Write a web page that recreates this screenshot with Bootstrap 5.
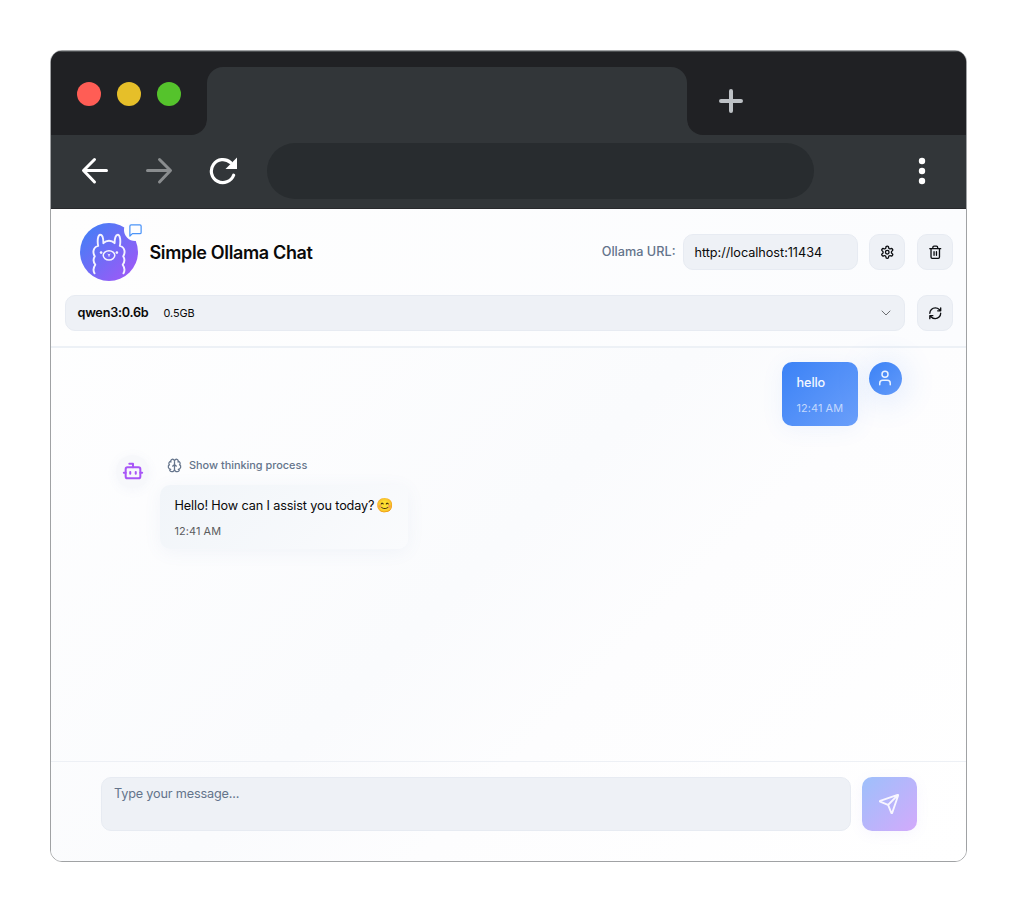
<!DOCTYPE html>
<html lang="en">
<head>
<meta charset="utf-8">
<meta name="viewport" content="width=device-width, initial-scale=1">
<title>Simple Ollama Chat</title>
<link rel="stylesheet" href="https://cdn.jsdelivr.net/npm/bootstrap@5.3.0/dist/css/bootstrap.min.css">
<style>
body{font-family:Inter,"Liberation Sans",sans-serif;background:#fff;color:#0a0a0a;padding:50px;height:912px;overflow:hidden}
.window{width:917px;height:812px;border:1px solid #a0a2a4;border-radius:12px;overflow:hidden;background:#fff}
.tabstrip{height:84px;background:#323639}
.strip-side{background:#202124;box-shadow:inset 0 1px #4b4e50}
.strip-left{width:156px;border-bottom-right-radius:16px;padding:2px 0 0 26px;gap:16px}
.strip-right{border-bottom-left-radius:16px;padding:38px 0 0 32px}
.tab-slot{width:480px;padding-top:16px;background:linear-gradient(#202124 40px,#323639 40px);box-shadow:inset 0 1px #4b4e50}
.tab{height:100%;background:#323639;border-radius:16px 16px 0 0}
.light{width:24px;height:24px;border-radius:50%}
.toolbar{height:74px;background:#323639;border-bottom:1px solid #28292c;padding:0 30px 1px}
.address{width:547px;height:56px;border-radius:28px;background:#282c2f;margin-left:29px}
.app{height:652px;background:linear-gradient(135deg,#fff 0%,#fafbfd 50%,#fdfdfe 65%,#fff 100%)}
.app-head{height:139px;border-bottom:2px solid #edf1f6;padding:14px 13px 0 14px;background:linear-gradient(90deg,#fefefe,#fbfcfe)}
.logo{width:58px;height:58px;border-radius:50%;background:linear-gradient(135deg,#3b82f6,#a855f7);margin-left:15px}
.logo-chip{top:-4px;right:-8px;width:22px;height:22px;border-radius:50%;background:#fdfdff}
.app-title{font-size:18px;font-weight:600;letter-spacing:-.35px;margin-left:11.5px;line-height:24px;padding-top:2px}
.url-label{font-size:12.7px;font-weight:500;color:#64748b;margin-right:7px}
.field{background:#eef1f6;border:1px solid #e7ebf2;border-radius:10px}
.url-field{width:175px;height:36px;font-size:12.7px;padding:8px 11px;line-height:19px;color:#0a0a0a;letter-spacing:-.04px}
.sq{width:36.5px;height:36px;padding:0;margin-left:11.5px;color:#0c0e12}
.sq-mid{margin-left:11px}
.row-model{margin-top:14px}
.model{height:36px;padding:0 12px 0 11.500px}
.model-name{font-size:12.7px;font-weight:600;letter-spacing:-.25px}
.model-size{font-size:10.9px;margin-left:15px;letter-spacing:-.05px}
.chat{height:413px;padding:14px 64px 0 65px}
.bubble{border-radius:10px;padding:11px 14px 0 14.500px;height:64px;font-size:12.7px;line-height:19px}
.bubble .stamp{font-size:10.9px;line-height:16px;margin-top:8px;letter-spacing:.1px}
.bubble-me{width:76px;background:linear-gradient(135deg,#3b82f6,#6b9ffa);color:#f4f8ff;box-shadow:0 3px 22px rgba(59,130,246,.08)}
.bubble-me .hi{font-weight:500;letter-spacing:-.1px}
.bubble-me .stamp{color:#c3d8fd}
.bubble-bot{width:247.5px;background:linear-gradient(135deg,#f1f5f9,#fafbfd);box-shadow:0 3px 18px rgba(100,130,180,.07)}
.bubble-bot .stamp{color:#5b5c5e}
.say{height:19px;letter-spacing:-.14px}
.emoji{font-size:14px;line-height:17px;margin-left:2px;letter-spacing:0}
.face{width:33px;height:33px;border-radius:50%}
.face-me{background:linear-gradient(135deg,#3b82f6,#639af9);margin-left:11px;box-shadow:0 3px 30px 6px rgba(59,130,246,.13)}
.face-bot{background:#f7f8fb;color:#a855f7;margin-right:11px;padding-bottom:2px;box-shadow:0 2px 12px rgba(100,120,180,.06)}
.bot-row{margin-top:29px}
.think{height:20px;padding-left:7px;margin-bottom:10px;font-size:10.9px;font-weight:500;color:#64748b;gap:7px}
.composer{height:98px;border-top:1px solid #edf0f5;padding:15px 49px 0 50px}
.msg{width:750px;height:54px;font-size:12.7px;line-height:19px;padding:6px 12px;color:#64748b;letter-spacing:-.18px}
.send{width:54.5px;height:54px;border-radius:10px;border:0;margin-left:11px;padding:0 1px 1px 0;background:linear-gradient(135deg,#9dc0fb,#d3aafb);box-shadow:0 3px 14px rgba(140,130,240,.07)}
svg{display:block;flex:none}
.ln{fill:none;stroke:currentColor;stroke-width:2;stroke-linecap:round;stroke-linejoin:round}
.sq .ln,.face-bot .ln{stroke-width:2.2}
</style>
</head>
<body>
<div class="window">
  <div class="tabstrip d-flex">
    <div class="strip-side strip-left d-flex align-items-center">
      <div class="light" style="background:#ff5d55"></div>
      <div class="light" style="background:#e6bf29"></div>
      <div class="light" style="background:#55c32c"></div>
    </div>
    <div class="tab-slot"><div class="tab"></div></div>
    <div class="strip-side strip-right flex-grow-1">
      <svg width="24" height="24" viewBox="0 0 24 24" fill="none" stroke="#bdc1c5" stroke-width="4" stroke-linecap="round"><path d="M12 2v20M2 12h20"/></svg>
    </div>
  </div>
  <div class="toolbar d-flex align-items-center">
    <svg width="28" height="28" viewBox="0 0 28 28" fill="none" stroke="#fff" stroke-width="3" stroke-linecap="round" stroke-linejoin="round"><path d="M25.500 13.500H3M13.500 2.500l-11 11 11 11.500"/></svg>
    <svg style="margin-left:36px;margin-right:36px" width="28" height="28" viewBox="0 0 28 28" fill="none" stroke="#8a8d8f" stroke-width="3" stroke-linecap="round" stroke-linejoin="round"><path d="M2.500 13.500H25M14.500 2.500l11 11-11 11.500"/></svg>
    <svg width="29" height="28" viewBox="0 0 29 28" fill="none"><path d="M24.600 18.200A11.500 11.500 0 1 1 21.500 5.500" stroke="#fff" stroke-width="3.200" stroke-linecap="round"/><path d="M28 .500v11.500H16.500z" fill="#fff"/></svg>
    <div class="address"></div>
    <svg style="margin-left:104px" width="8" height="28" viewBox="0 0 8 28" fill="#fff"><circle cx="4" cy="4" r="3.200"/><circle cx="4" cy="14" r="3.200"/><circle cx="4" cy="24" r="3.200"/></svg>
  </div>
  <div class="app">
    <header class="app-head">
      <div class="d-flex align-items-center">
        <div class="logo position-relative">
          <svg width="58" height="58" viewBox="0 0 58 58" fill="none" stroke="#f4f3ff" stroke-width="1.900" stroke-linecap="round" stroke-linejoin="round">
            <path d="M14.500 50.300c-1.300-2.300-1.400-5.400.8-8.500-2-2.700-2.200-5.900-.5-8.600-2.200-3-2.200-8.900 3.400-10.300-1.100-5-.3-11.200 2-11.200 2.100 0 3.200 3.800 3.200 8.500 3.200-3.200 8-3.200 11.200 0 0-4.700 1.100-8.500 3.200-8.500 2.300 0 3.100 6.200 2 11.200 5.600 1.400 5.600 7.300 3.400 10.300 1.700 2.700 1.500 5.900-.5 8.600 2.200 3.100 2.100 6.200.8 8.500"/>
            <ellipse cx="29" cy="32.300" rx="5.800" ry="4.600" stroke-width="1.500"/>
            <path d="M28 31.300l1 .8 1-.8M29 32v1.200" stroke-width="1"/>
            <g fill="#f4f3ff" stroke="none"><circle cx="21.100" cy="29.600" r="1.300"/><circle cx="36.900" cy="29.600" r="1.300"/></g>
          </svg>
          <div class="logo-chip position-absolute d-flex align-items-center justify-content-center">
            <svg class="ln" style="color:#4b94f8" width="15" height="15" viewBox="0 0 24 24"><path d="M21 15a2 2 0 0 1-2 2H7l-4 4V5a2 2 0 0 1 2-2h14a2 2 0 0 1 2 2z"/></svg>
          </div>
        </div>
        <div class="app-title">Simple Ollama Chat</div>
        <div class="url-label ms-auto">Ollama URL:</div>
        <div class="field url-field">http://localhost:11434</div>
        <button class="btn field sq sq-mid d-flex align-items-center justify-content-center" aria-label="Settings"><svg class="ln" width="14.500" height="14.500" viewBox="0 0 24 24"><path d="M12.220 2h-.44a2 2 0 0 0-2 2v.18a2 2 0 0 1-1 1.730l-.43.25a2 2 0 0 1-2 0l-.15-.08a2 2 0 0 0-2.730.73l-.22.38a2 2 0 0 0 .73 2.730l.15.1a2 2 0 0 1 1 1.720v.51a2 2 0 0 1-1 1.740l-.15.09a2 2 0 0 0-.73 2.730l.22.38a2 2 0 0 0 2.730.73l.15-.08a2 2 0 0 1 2 0l.43.25a2 2 0 0 1 1 1.730V20a2 2 0 0 0 2 2h.44a2 2 0 0 0 2-2v-.18a2 2 0 0 1 1-1.730l.43-.25a2 2 0 0 1 2 0l.15.08a2 2 0 0 0 2.730-.73l.22-.39a2 2 0 0 0-.73-2.730l-.15-.08a2 2 0 0 1-1-1.740v-.5a2 2 0 0 1 1-1.740l.15-.09a2 2 0 0 0 .73-2.730l-.22-.38a2 2 0 0 0-2.730-.73l-.15.08a2 2 0 0 1-2 0l-.43-.25a2 2 0 0 1-1-1.730V4a2 2 0 0 0-2-2z"/><circle cx="12" cy="12" r="3"/></svg></button>
        <button class="btn field sq d-flex align-items-center justify-content-center" aria-label="Clear chat"><svg class="ln" width="14.500" height="14.500" viewBox="0 0 24 24"><path d="M3 6h18M19 6v14c0 1-1 2-2 2H7c-1 0-2-1-2-2V6M8 6V4c0-1 1-2 2-2h4c1 0 2 1 2 2v2M10 11v6M14 11v6"/></svg></button>
      </div>
      <div class="row-model d-flex">
        <div class="field model flex-grow-1 d-flex align-items-center">
          <span class="model-name">qwen3:0.6b</span><span class="model-size">0.5GB</span>
          <svg class="ln ms-auto" style="color:#6c6e72" width="12" height="12" viewBox="0 0 24 24"><path d="m4 8 8 8 8-8"/></svg>
        </div>
        <button class="btn field sq d-flex align-items-center justify-content-center" aria-label="Refresh models"><svg class="ln" width="14.500" height="14.500" viewBox="0 0 24 24"><path d="M3 12a9 9 0 0 1 9-9 9.750 9.750 0 0 1 6.740 2.740L21 8M21 3v5h-5M21 12a9 9 0 0 1-9 9 9.750 9.750 0 0 1-6.740-2.740L3 16M8 16H3v5"/></svg></button>
      </div>
    </header>
    <main class="chat">
      <div class="d-flex justify-content-end align-items-start">
        <div class="bubble bubble-me"><div class="hi">hello</div><div class="stamp text-nowrap">12:41 AM</div></div>
        <div class="face face-me d-flex align-items-center justify-content-center"><svg class="ln" style="color:#e9f2ff;margin:0 1px 1px 0" width="18" height="18" viewBox="0 0 24 24"><circle cx="12" cy="7" r="4"/><path d="M19 21v-2a4 4 0 0 0-4-4H9a4 4 0 0 0-4 4v2"/></svg></div>
      </div>
      <div class="bot-row d-flex align-items-start">
        <div class="face face-bot d-flex align-items-center justify-content-center"><svg class="ln" width="22" height="22" viewBox="0 0 24 24"><path d="M12 8V4H8M2 14h2M20 14h2M15 13v2M9 13v2"/><rect x="4" y="8" width="16" height="12" rx="2"/></svg></div>
        <div>
          <div class="think d-flex align-items-center"><svg class="ln" width="15" height="15" viewBox="0 0 24 24"><path d="M12 18V5M15 13a4.170 4.170 0 0 1-3-4 4.170 4.170 0 0 1-3 4M17.598 6.500A3 3 0 1 0 12 5a3 3 0 1 0-5.598 1.500M17.997 5.125a4 4 0 0 1 2.526 5.770M18 18a4 4 0 0 0 2-7.464M19.967 17.483A4 4 0 1 1 12 18a4 4 0 1 1-7.967-.517M6 18a4 4 0 0 1-2-7.464M6.003 5.125a4 4 0 0 0-2.526 5.770"/></svg><span>Show thinking process</span></div>
          <div class="bubble bubble-bot"><div class="say d-flex text-nowrap"><span>Hello! How can I assist you today?</span><span class="emoji">😊</span></div><div class="stamp">12:41 AM</div></div>
        </div>
      </div>
    </main>
    <footer class="composer d-flex">
      <div class="field msg">Type your message...</div>
      <button class="btn send d-flex align-items-center justify-content-center" aria-label="Send"><svg class="ln" style="color:#f8f6ff" width="22" height="22" viewBox="0 0 24 24"><path d="M14.536 21.686a.5.5 0 0 0 .937-.024l6.500-19a.496.496 0 0 0-.635-.635l-19 6.500a.5.5 0 0 0-.024.937l7.930 3.180a2 2 0 0 1 1.112 1.110zM21.854 2.147l-10.940 10.939"/></svg></button>
    </footer>
  </div>
</div>
<script src="https://cdn.jsdelivr.net/npm/bootstrap@5.3.0/dist/js/bootstrap.bundle.min.js"></script>
</body>
</html>
